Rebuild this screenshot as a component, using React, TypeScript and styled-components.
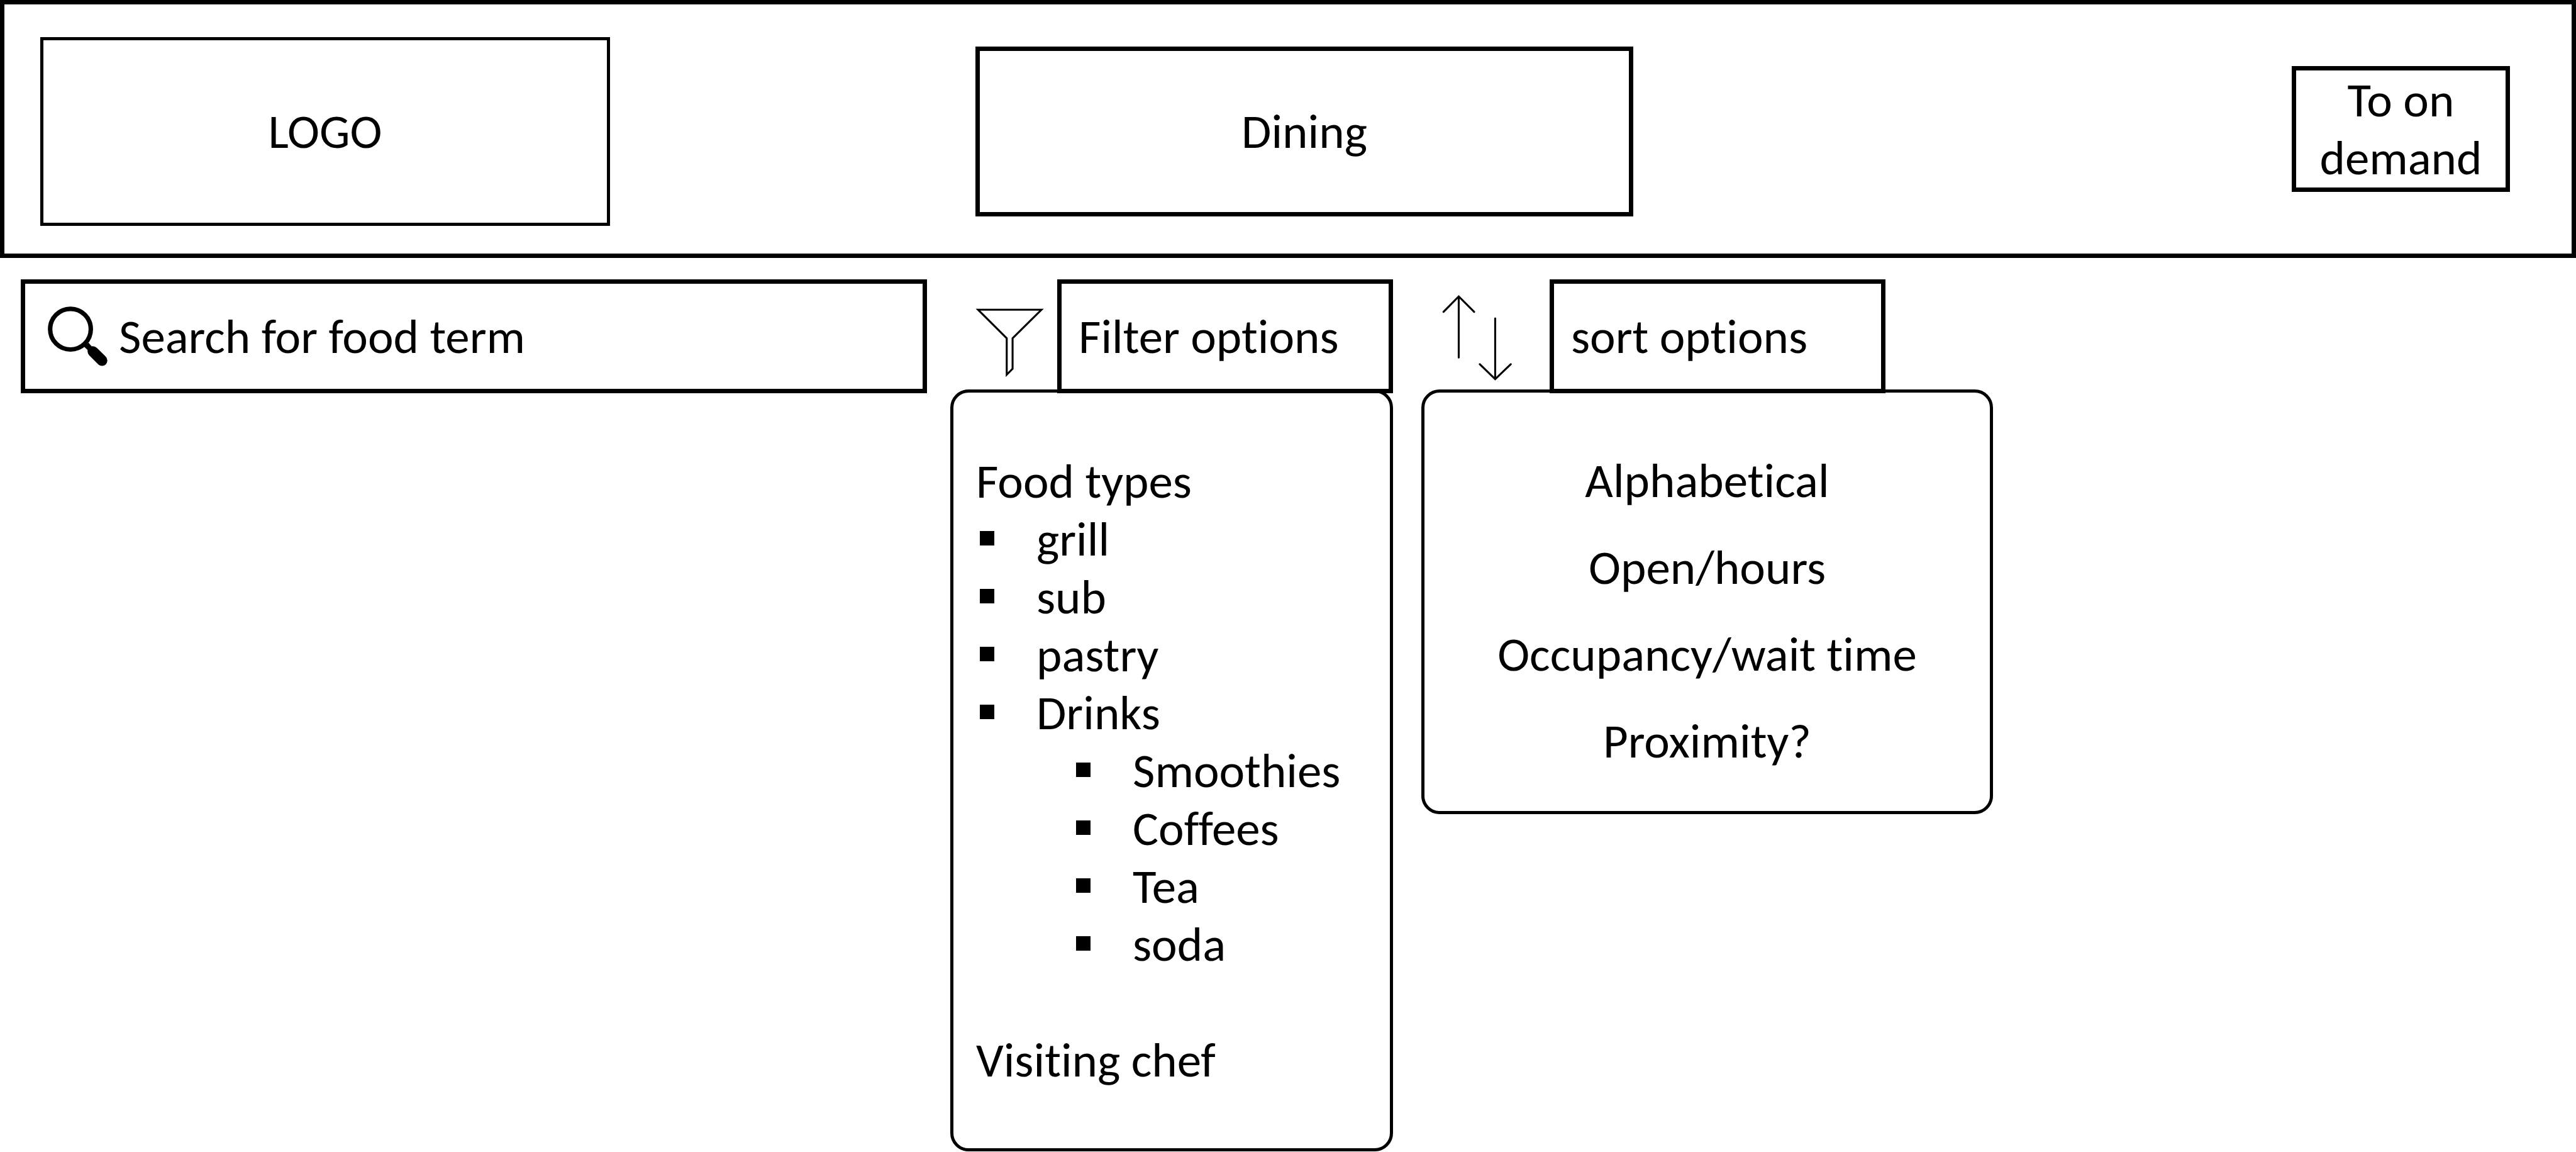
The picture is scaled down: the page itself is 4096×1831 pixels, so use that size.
import React from "react";
import styled, { createGlobalStyle } from "styled-components";

const GlobalStyle = createGlobalStyle`
  *, *::before { box-sizing: border-box; }
  body {
    margin: 0;
    background: #fff;
    color: #000;
    font-family: Carlito, Calibri, Lato, sans-serif;
    font-size: 77px;
    line-height: 92px;
    font-variant-ligatures: none;
  }
  h1, h2, p, ul { margin: 0; padding: 0; font: inherit; }
  ul { list-style: none; }
  button, input { font: inherit; color: inherit; background: none; border: 0; padding: 0; }
`;

const Header = styled.header`
  display: grid;
  grid-template-columns: 906fr 581fr 1046fr 1047fr 347fr;
  align-items: center;
  height: 410px;
  padding: 52px 98px 44px 57px;
  border: 7px solid #000;
`;

const Logo = styled.a`
  display: flex;
  align-items: center;
  justify-content: center;
  height: 300px;
  border: 5px solid #000;
  color: inherit;
  text-decoration: none;
`;

const Title = styled.h1`
  grid-column: 3;
  display: flex;
  align-items: center;
  justify-content: center;
  height: 270px;
  border: 7px solid #000;
`;

const DemandButton = styled.button`
  grid-column: 5;
  height: 200px;
  margin-bottom: 8px;
  border: 7px solid #000;
  text-align: center;
`;

const Controls = styled.main`
  display: grid;
  grid-template-columns: 1441fr 37fr 704fr 45fr 909fr 927fr;
  align-items: start;
  padding: 34px 0 0 33px;
`;

const SearchBox = styled.label`
  display: flex;
  align-items: center;
  gap: 18px;
  height: 181px;
  padding: 0 36px;
  border: 7px solid #000;
`;

const SearchInput = styled.input`
  flex: 1;
  min-width: 0;
  height: 92px;
  outline: none;
  &::placeholder { color: #000; opacity: 1; }
`;

const Group = styled.section<{ $column: number }>`
  grid-column: ${(p) => p.$column};
`;

const TabRow = styled.div`
  display: flex;
  height: 181px;
`;

const TabIcon = styled.svg`
  flex: none;
  fill: none;
  stroke: #000;
`;

const Tab = styled.button`
  flex: 0 0 534px;
  padding: 0 27px;
  border: 7px solid #000;
  text-align: left;
`;

const Panel = styled.div`
  margin-top: -6px;
  border: 5px solid #000;
  border-radius: 29px;
  background: #fff;
`;

const FilterPanel = styled(Panel)`
  padding: 95px 36px 94px;
`;

const FilterList = styled.ul`
  & & { padding-left: 153px; }
`;

const FilterItem = styled.p`
  display: flex;
  align-items: center;
  &::before {
    content: "";
    width: 23px;
    height: 23px;
    margin: 0 67px 4px 6px;
    background: #000;
  }
`;

const VisitingChef = styled.h2`
  margin-top: 92px;
`;

const SortPanel = styled(Panel)`
  padding: 94px 36px 65px;
`;

const SortList = styled.ul`
  display: flex;
  flex-direction: column;
  align-items: center;
  gap: 46px;
`;

const SortOption = styled.button`
  display: block;
  white-space: nowrap;
`;

const foods = ["grill", "sub", "pastry"];
const drinks = ["Smoothies", "Coffees", "Tea", "soda"];
const sorts = ["Alphabetical", "Open/hours", "Occupancy/wait time", "Proximity?"];

export default function App() {
  return (
    <>
      <GlobalStyle />
      <Header>
        <Logo href="#">LOGO</Logo>
        <Title>Dining</Title>
        <DemandButton type="button">
          To on
          <br />
          demand
        </DemandButton>
      </Header>
      <Controls>
        <SearchBox>
          <svg width="95" height="95" viewBox="37 44 306 307" aria-hidden="true">
            <circle cx="153" cy="161" r="104.5" fill="none" stroke="#000" strokeWidth="23" />
            <path d="M246 231 L262 249 Q278 247 289 257 L334 302 A27 27 0 0 1 296 342 L250 296 Q239 285 241 268 L222 250 Z" />
          </svg>
          <SearchInput type="search" aria-label="Search for food term" placeholder="Search for food term" />
        </SearchBox>
        <Group $column={3}>
          <TabRow>
            <TabIcon width="170" height="181" viewBox="0 0 170 181" aria-hidden="true">
              <g transform="translate(31.8 39.3) scale(0.31)" strokeWidth="10">
                <path d="M40 29 H365 L217 175 V332 L187 362 V175 Z" />
              </g>
            </TabIcon>
            <Tab type="button" aria-expanded="true">Filter options</Tab>
          </TabRow>
          <FilterPanel>
            <h2>Food types</h2>
            <FilterList>
              {foods.map((f) => (
                <li key={f}>
                  <FilterItem>{f}</FilterItem>
                </li>
              ))}
              <li>
                <FilterItem>Drinks</FilterItem>
                <FilterList>
                  {drinks.map((d) => (
                    <li key={d}>
                      <FilterItem>{d}</FilterItem>
                    </li>
                  ))}
                </FilterList>
              </li>
            </FilterList>
            <VisitingChef>Visiting chef</VisitingChef>
          </FilterPanel>
        </Group>
        <Group $column={5}>
          <TabRow>
            <TabIcon width="204" height="181" viewBox="0 0 204 181" aria-hidden="true">
              <g transform="translate(17 11.4) scale(0.31)" strokeWidth="10" strokeLinecap="round">
                <path d="M137 364 V52 M59 130 L137 51 L216 130" />
                <path d="M324 163 V474 M245 398 L324 475 L404 398" />
              </g>
            </TabIcon>
            <Tab type="button" aria-expanded="true">sort options</Tab>
          </TabRow>
          <SortPanel>
            <SortList>
              {sorts.map((s) => (
                <li key={s}>
                  <SortOption type="button">{s}</SortOption>
                </li>
              ))}
            </SortList>
          </SortPanel>
        </Group>
      </Controls>
    </>
  );
}
